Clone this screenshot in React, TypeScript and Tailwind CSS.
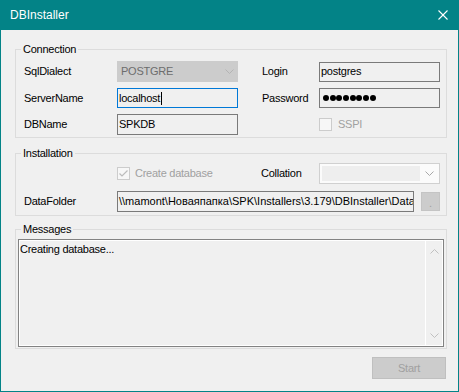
import React from 'react';

// small drawings used by the WinForms-style controls
const Chevron = ({ color, up = false }: { color: string; up?: boolean }) => (
    <svg width="9" height="5" viewBox="0 0 9 5" fill="none" stroke={color} strokeWidth="1">
        <polyline points={up ? '0.5,4.5 4.5,0.5 8.5,4.5' : '0.5,0.5 4.5,4.5 8.5,0.5'} />
    </svg>
);

const CheckBox: React.FC<{ checked?: boolean }> = ({ checked }) => (
    <div className="w-[13px] h-[13px] border border-[#cccccc] bg-[#f7f7f7] flex items-center justify-center shrink-0">
        {checked && (
            <svg width="9" height="7" viewBox="0 0 9 7" fill="none" stroke="#bcbcbc" strokeWidth="1.2">
                <polyline points="0.5,3.5 3,6 8.5,0.5" />
            </svg>
        )}
    </div>
);

const TextBox: React.FC<{ children?: React.ReactNode; focused?: boolean; className?: string }> = ({ children, focused, className }) => (
    <div
        className={`h-[20px] border ${focused ? 'border-[#0078d7]' : 'border-[#7a7a7a]'} bg-[#f0f0f0] pl-[1px] flex items-center overflow-hidden whitespace-nowrap ${className ?? ''}`}
    >
        {children}
    </div>
);

export default function App() {
    return (
        <div className="w-[459px] h-[392px] bg-[#038387] flex flex-col font-['Liberation_Sans',Arial,sans-serif] text-[11px] tracking-[-0.25px] text-black select-none">
            {/* title bar */}
            <div className="h-[30px] flex items-center justify-between shrink-0">
                <span className="pl-[10px] text-[12px] tracking-normal text-white">DBInstaller</span>
                <svg className="mr-[11px] -mt-[1px]" width="10" height="10" viewBox="0 0 10 10" stroke="#ffffff" strokeWidth="1.1">
                    <line x1="0.5" y1="0.5" x2="9.5" y2="9.5" />
                    <line x1="9.5" y1="0.5" x2="0.5" y2="9.5" />
                </svg>
            </div>

            <div className="flex-1 mx-[1px] mb-[1px] bg-[#f0f0f0] flex flex-col">
                {/* Connection */}
                <fieldset className="ml-[14px] mt-[13px] w-[432px] border border-[#dcdcdc] pl-[8px] pr-[5px] pt-[5px] pb-[2px]">
                    <legend className="ml-[-3px] px-[2px] leading-[13px]">Connection</legend>
                    <div className="flex flex-col gap-[6px]">
                        <div className="flex items-center h-[21px]">
                            <span className="w-[93px]">SqlDialect</span>
                            <div className="w-[121px] h-[21px] bg-[#cccccc] border border-[#cccccc] pl-[3px] pr-[3px] flex items-center justify-between text-[#6d6d6d]">
                                <span>POSTGRE</span>
                                <Chevron color="#b4b4b4" />
                            </div>
                            <span className="ml-[24px] w-[57px]">Login</span>
                            <TextBox className="w-[121px]">postgres</TextBox>
                        </div>
                        <div className="flex items-center h-[20px]">
                            <span className="w-[93px]">ServerName</span>
                            <TextBox focused className="w-[121px]">
                                <span>localhost</span>
                                <span className="ml-[1px] w-[1px] h-[13px] bg-black" />
                            </TextBox>
                            <span className="ml-[24px] w-[57px]">Password</span>
                            <TextBox className="w-[121px] pl-[3px] gap-[0.7px]">
                                {Array.from({ length: 8 }).map((_, i) => (
                                    <span key={i} className="w-[6px] h-[6px] rounded-full bg-black shrink-0" />
                                ))}
                            </TextBox>
                        </div>
                        <div className="flex items-center h-[21px]">
                            <span className="w-[93px]">DBName</span>
                            <TextBox className="w-[121px] h-[21px]">SPKDB</TextBox>
                            <span className="ml-[24px] w-[57px]" />
                            <CheckBox />
                            <span className="ml-[6px] text-[#a0a0a0]">SSPI</span>
                        </div>
                    </div>
                </fieldset>

                {/* Installation */}
                <fieldset className="ml-[14px] mt-[9px] w-[432px] border border-[#dcdcdc] pl-[8px] pr-[5px] pt-[3px] pb-[3px]">
                    <legend className="ml-[-3px] px-[2px] leading-[13px]">Installation</legend>
                    <div className="flex flex-col gap-[7px]">
                        <div className="flex items-center h-[21px]">
                            <span className="w-[93px]" />
                            <div className="w-[121px] flex items-center">
                                <CheckBox checked />
                                <span className="ml-[5px] text-[#a0a0a0]">Create database</span>
                            </div>
                            <span className="ml-[23px] w-[58px]">Collation</span>
                            <div className="w-[121px] h-[21px] border border-[#d0d0d0] bg-[#fbfbfb] pl-[2px] pr-[5px] flex items-center justify-between">
                                <div className="w-[98px] h-[15px] bg-[#eeeeee]" />
                                <Chevron color="#a8a8a8" />
                            </div>
                        </div>
                        <div className="flex items-center h-[21px]">
                            <span className="w-[93px]">DataFolder</span>
                            <TextBox className="w-[297px] h-[21px] pl-0 tracking-normal">
                                {'\\\\mamont\\Новаяпапка\\SPK\\Installers\\3.179\\DBInstaller\\Data'}
                            </TextBox>
                            <div className="ml-[7px] w-[19px] h-[19px] bg-[#cccccc] border border-[#c4c4c4] flex items-end justify-center text-[#a0a0a0] leading-[14px]">
                                .
                            </div>
                        </div>
                    </div>
                </fieldset>

                {/* Messages */}
                <fieldset className="ml-[14px] mt-[7px] w-[432px] border border-[#dcdcdc] pl-[2px] pr-[2px] pt-[3px] pb-[1px]">
                    <legend className="ml-[3px] px-[2px] leading-[13px]">Messages</legend>
                    <div className="h-[108px] border border-[#828282]">
                        <div className="h-full border border-white flex">
                            <div className="flex-1 pt-[2px] leading-[13px]">Creating database...</div>
                            <div className="w-[17px] border-l border-white flex flex-col items-center justify-between pt-[8px] pb-[7px]">
                                <Chevron color="#c0c0c0" up />
                                <Chevron color="#c0c0c0" />
                            </div>
                        </div>
                    </div>
                </fieldset>

                <div className="flex justify-end mt-[8px] mr-[12px]">
                    <div className="w-[74px] h-[22px] bg-[#cccccc] border border-[#bfbfbf] flex items-center justify-center text-[#a0a0a0]">
                        Start
                    </div>
                </div>
            </div>
        </div>
    );
}
